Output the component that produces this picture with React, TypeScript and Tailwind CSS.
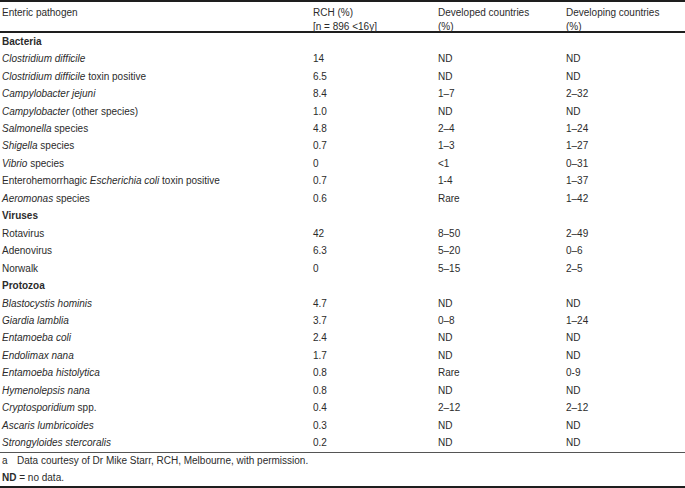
const ROWS: ([string, string, string, string] | string)[] = [
  "Bacteria",
  ["i:Clostridium difficile", "14", "ND", "ND"],
  ["i:Clostridium difficile| toxin positive", "6.5", "ND", "ND"],
  ["i:Campylobacter jejuni", "8.4", "1–7", "2–32"],
  ["i:Campylobacter| (other species)", "1.0", "ND", "ND"],
  ["i:Salmonella| species", "4.8", "2–4", "1–24"],
  ["i:Shigella| species", "0.7", "1–3", "1–27"],
  ["i:Vibrio| species", "0", "<1", "0–31"],
  ["Enterohemorrhagic |i:Escherichia coli| toxin positive", "0.7", "1-4", "1–37"],
  ["i:Aeromonas| species", "0.6", "Rare", "1–42"],
  "Viruses",
  ["Rotavirus", "42", "8–50", "2–49"],
  ["Adenovirus", "6.3", "5–20", "0–6"],
  ["Norwalk", "0", "5–15", "2–5"],
  "Protozoa",
  ["i:Blastocystis hominis", "4.7", "ND", "ND"],
  ["i:Giardia lamblia", "3.7", "0–8", "1–24"],
  ["i:Entamoeba coli", "2.4", "ND", "ND"],
  ["i:Endolimax nana", "1.7", "ND", "ND"],
  ["i:Entamoeba histolytica", "0.8", "Rare", "0-9"],
  ["i:Hymenolepsis nana", "0.8", "ND", "ND"],
  ["i:Cryptosporidium| spp.", "0.4", "2–12", "2–12"],
  ["i:Ascaris lumbricoides", "0.3", "ND", "ND"],
  ["i:Strongyloides stercoralis", "0.2", "ND", "ND"],
];

// "i:" marks an italic chunk, "|" splits chunks
function Name({ text }: { text: string }) {
  return (
    <>
      {text.split("|").map((part, i) =>
        part.startsWith("i:") ? <i key={i}>{part.slice(2)}</i> : <span key={i}>{part}</span>
      )}
    </>
  );
}

const GRID = "grid grid-cols-[311px_125px_128px_1fr] pl-[2px]";

export default function App() {
  return (
    <div className="w-[685px] h-[488px] bg-white text-[10px] text-[#2b2b2b] font-['Liberation_Sans',Arial,sans-serif] leading-[14px]">
      <div className="border-t-2 border-[#1e1e1e]" />
      <div className={`${GRID} pt-[4px] h-[29px]`}>
        <div>Enteric pathogen</div>
        <div>RCH (%)<br />[n = 896 &lt;16y]</div>
        <div>Developed countries<br />(%)</div>
        <div>Developing countries<br />(%)</div>
      </div>
      <div className="border-t-2 border-[#1e1e1e]" />
      <div className="h-[419px] flex flex-col">
        {ROWS.map((row, i) =>
          typeof row === "string" ? (
            <div key={i} className={`${GRID} h-[17.46px] items-center font-bold`}>
              <div>{row}</div>
            </div>
          ) : (
            <div key={i} className={`${GRID} h-[17.46px] items-center`}>
              <div><Name text={row[0]} /></div>
              <div>{row[1]}</div>
              <div>{row[2]}</div>
              <div>{row[3]}</div>
            </div>
          )
        )}
      </div>
      <div className="border-t border-[#555]" />
      <div className="pl-[2px] h-[16.5px] flex items-center">
        <span className="w-[15px]">a</span>
        <span>Data courtesy of Dr Mike Starr, RCH, Melbourne, with permission.</span>
      </div>
      <div className="pl-[2px] h-[16.5px] flex items-center">
        <span><b>ND</b> = no data.</span>
      </div>
      <div className="border-t-2 border-[#1e1e1e]" />
    </div>
  );
}
